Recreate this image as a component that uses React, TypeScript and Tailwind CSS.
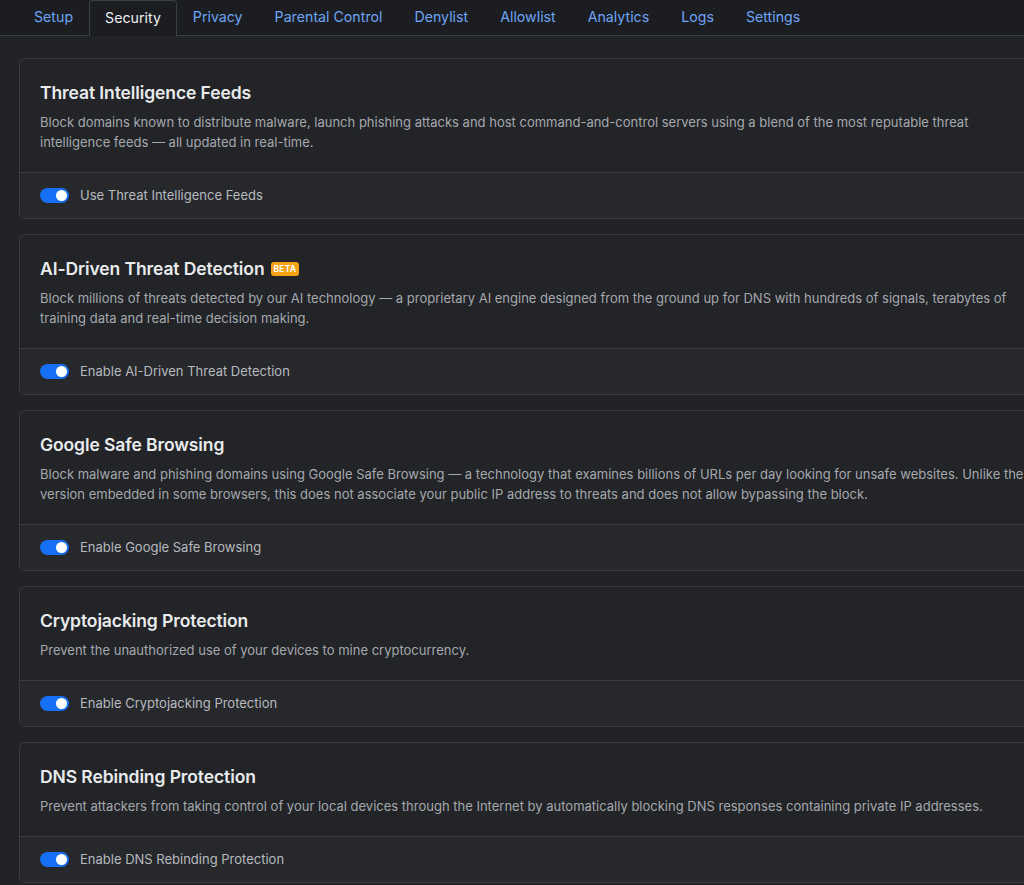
import React, { useState } from "react";

interface Feature {
    id: string;
    title: string;
    beta?: boolean;
    description: string;
    label: string;
}

const tabs = ["Setup", "Security", "Privacy", "Parental Control", "Denylist", "Allowlist", "Analytics", "Logs", "Settings"];

const features: Feature[] = [
    {
        id: "threat-feeds",
        title: "Threat Intelligence Feeds",
        description: "Block domains known to distribute malware, launch phishing attacks and host command-and-control servers using a blend of the most reputable threat intelligence feeds — all updated in real-time.",
        label: "Use Threat Intelligence Feeds",
    },
    {
        id: "ai-detection",
        title: "AI-Driven Threat Detection",
        beta: true,
        description: "Block millions of threats detected by our AI technology — a proprietary AI engine designed from the ground up for DNS with hundreds of signals, terabytes of training data and real-time decision making.",
        label: "Enable AI-Driven Threat Detection",
    },
    {
        id: "safe-browsing",
        title: "Google Safe Browsing",
        description: "Block malware and phishing domains using Google Safe Browsing — a technology that examines billions of URLs per day looking for unsafe websites. Unlike the version embedded in some browsers, this does not associate your public IP address to threats and does not allow bypassing the block.",
        label: "Enable Google Safe Browsing",
    },
    {
        id: "cryptojacking",
        title: "Cryptojacking Protection",
        description: "Prevent the unauthorized use of your devices to mine cryptocurrency.",
        label: "Enable Cryptojacking Protection",
    },
    {
        id: "dns-rebinding",
        title: "DNS Rebinding Protection",
        description: "Prevent attackers from taking control of your local devices through the Internet by automatically blocking DNS responses containing private IP addresses.",
        label: "Enable DNS Rebinding Protection",
    },
];

// 토글 스위치
function Toggle({ on, onChange }: { on: boolean; onChange: () => void }) {
    return (
        <button
            onClick={onChange}
            className={`relative w-[29px] h-[15px] rounded-full shrink-0 ${on ? "bg-[#1670f5]" : "bg-[#3a3d42]"}`}
        >
            <span className={`absolute top-[2px] w-[11px] h-[11px] rounded-full bg-white ${on ? "left-[16px]" : "left-[2px]"}`} />
        </button>
    );
}

export default function App() {
    const [active, setActive] = useState("Security");
    const [enabled, setEnabled] = useState<{ [key: string]: boolean }>({
        "threat-feeds": true,
        "ai-detection": true,
        "safe-browsing": true,
        "cryptojacking": true,
        "dns-rebinding": true,
    });

    const toggle = (id: string) => setEnabled({ ...enabled, [id]: !enabled[id] });

    return (
        <div className="w-[1024px] h-[885px] overflow-hidden bg-[#212327] text-[#dfe1e4]" style={{ fontFamily: "Inter, 'Noto Sans', sans-serif" }}>
            {/* 탭 바 */}
            <div className="h-[36px] bg-[#1b1d21] border-b border-[#3b3e43] flex items-end pl-[18px]">
                {tabs.map((tab) =>
                    tab === active ? (
                        <button key={tab} className="h-[36px] px-[15px] -mb-px bg-[#1b1d21] border border-b-0 border-[#3b3e43] rounded-t-[4px] text-[14.2px] text-[#eceef0] leading-none flex items-center">
                            {tab}
                        </button>
                    ) : (
                        <button key={tab} onClick={() => setActive(tab)} className="h-[35px] px-[16px] text-[14.2px] text-[#6ea5f5] leading-none flex items-center">
                            {tab}
                        </button>
                    )
                )}
            </div>

            {/* 카드 목록 */}
            <div className="pt-[22px] pl-[19px] flex flex-col gap-[15px]">
                {features.map((f) => (
                    <div key={f.id} className="w-[1040px] shrink-0 rounded-[6px] border border-[#3a3c41] bg-[#222428] overflow-hidden">
                        <div className="px-[20px] pt-[23px] pb-[20px]">
                            <div className="flex items-center gap-[6px] h-[22px]">
                                <h5 className="text-[17.5px] font-semibold text-[#e9ebed] leading-[22px] tracking-[-0.1px]">{f.title}</h5>
                                {f.beta && (
                                    <span className="bg-[#f5a215] text-white text-[8.5px] font-bold leading-none px-[3px] py-[3px] rounded-[3px] tracking-[0.2px]">BETA</span>
                                )}
                            </div>
                            <p className="mt-[8px] w-[990px] text-[13px] leading-[20px] text-[#a5a8ad]">{f.description}</p>
                        </div>
                        <div className="h-[46px] border-t border-[#3a3c41] bg-[#26282c] px-[20px] flex items-center gap-[11px]">
                            <Toggle on={enabled[f.id]} onChange={() => toggle(f.id)} />
                            <span className="text-[13px] text-[#b7babf]">{f.label}</span>
                        </div>
                    </div>
                ))}
            </div>
        </div>
    );
}
